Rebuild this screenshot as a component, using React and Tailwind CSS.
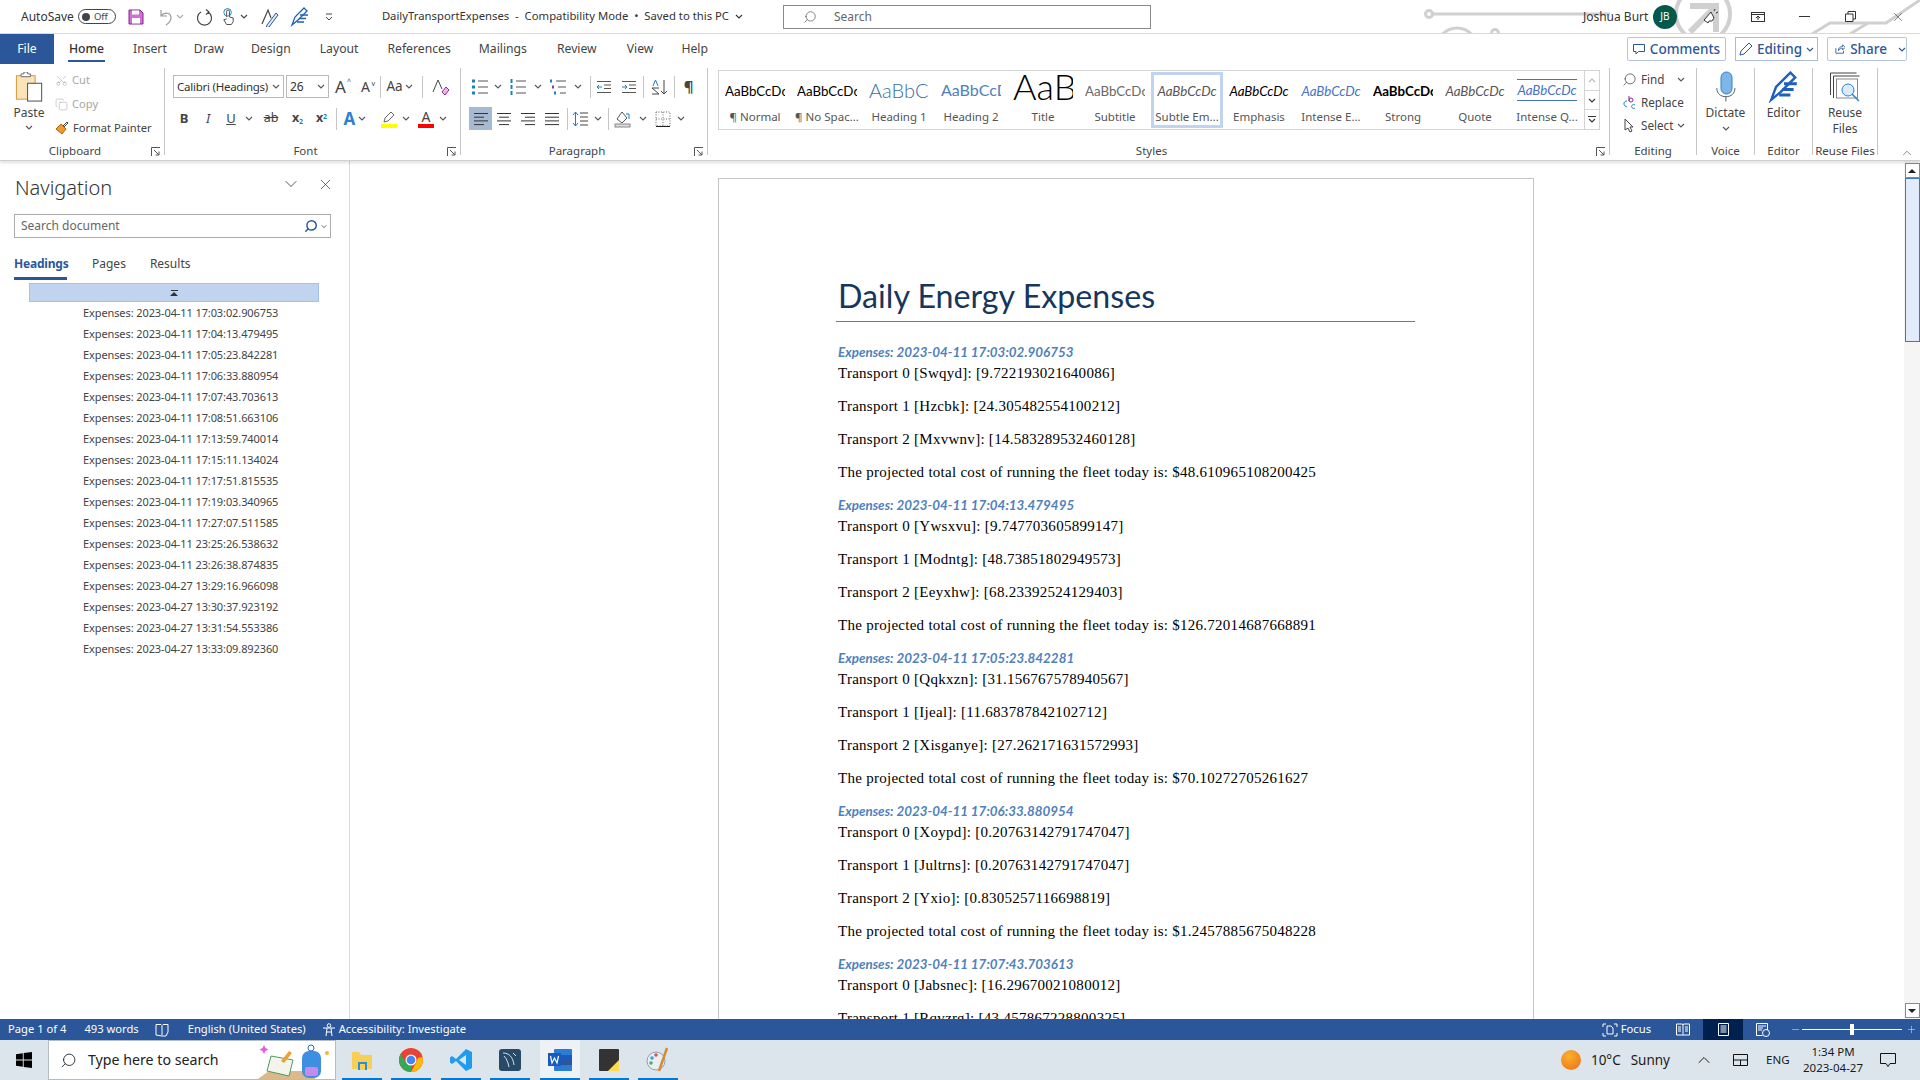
import React from "react";
import { Search, X, ChevronDown, ChevronUp, Minus, Plus, Scissors, Copy } from "lucide-react";

const Chev = ({ c = "#555", cls = "" }) => (
  <svg viewBox="0 0 8 5" className={`w-2 h-[5px] shrink-0 ${cls}`}><path d="M1 1l3 3 3-3" stroke={c} strokeWidth="1.1" fill="none" /></svg>
);
const VSep = ({ cls = "h-[22px] mx-[2px]" }) => <div className={`w-px bg-[#c6c6c6] shrink-0 ${cls}`} />;
const Launcher = () => (
  <svg viewBox="0 0 10 10" className="w-[10px] h-[10px] absolute right-[3px] bottom-[-2px]"><path d="M.5 9V.5H9M3 3l5 5M8 4.5V8H4.5" stroke="#555" fill="none" /></svg>
);
const Group = ({ label, w, lc = "", children }) => (
  <div className={`relative shrink-0 h-[87px] border-r border-[#c6c6c6] ${w}`}>
    {children}
    <div className={`absolute inset-x-0 bottom-[-4px] text-center text-[11.5px] leading-[16px] text-[#444] ${lc}`}>{label}</div>
  </div>
);
const Btn = ({ w = "w-6", cls = "", children }) => (
  <div className={`h-[23px] flex items-center justify-center shrink-0 ${w} ${cls}`}>{children}</div>
);

const Lines = ({ kind }) => {
  const rows = { left: [[1, 15], [1, 11], [1, 15], [1, 11]], center: [[1, 15], [3, 13], [1, 15], [3, 13]], right: [[1, 15], [5, 15], [1, 15], [5, 15]], just: [[1, 15], [1, 15], [1, 15], [1, 15]] }[kind];
  return (
    <svg viewBox="0 0 16 14" className="w-4 h-[14px]">
      {rows.map((r, i) => <path key={i} d={`M${r[0]} ${1.5 + i * 3.7}H${r[1]}`} stroke="#333" />)}
    </svg>
  );
};
const ListIcon = ({ n }) => (
  <svg viewBox="0 0 18 16" className="w-[18px] h-4">
    {[2, 8, 14].map((y, i) => (
      <g key={y}>
        {n === 0 && <rect x="1" y={y - 1.5} width="3" height="3" fill="#1e7fc4" />}
        {n === 1 && <rect x="1.5" y={y - 2} width="2" height="4" fill="#1e7fc4" />}
        {n === 2 && <rect x={1 + i * 2} y={y - 1.5} width="2" height="3" fill={i === 1 ? "#8a3fb0" : "#1e7fc4"} />}
        <path d={`M${n === 2 ? 7 + i * 2 : 7} ${y}H17`} stroke="#555" />
      </g>
    ))}
  </svg>
);

const QatUndo = () => (
  <svg viewBox="0 0 18 18" className="w-[18px] h-[18px]"><path d="M4 2v6h6M4 8c3-4 10-4 10 2 0 3-2 5-5 7" stroke="#9a9a9a" strokeWidth="1.2" fill="none" /></svg>
);
const QatRedo = () => (
  <svg viewBox="0 0 18 18" className="w-[18px] h-[18px]"><path d="M10 1.5 13 4l-3 2.5M12 4A7 7 0 1 1 5 4" stroke="#444" strokeWidth="1.2" fill="none" /></svg>
);
const PenA = () => (
  <svg viewBox="0 0 20 20" className="w-5 h-5"><path d="M2 17 8 3l3 8" stroke="#444" strokeWidth="1.2" fill="none" /><path d="m7 18 9-12 2 2-9 12-3 1z" stroke="#2b579a" fill="#dbe6f4" /></svg>
);
const PenB = ({ cls = "w-5 h-5", sw = 1.3 }) => (
  <svg viewBox="0 0 20 20" className={cls}><path d="m2 18 3-8 9-9 3 3-9 9z" stroke="#1f5fbf" strokeWidth={sw} fill="none" /><path d="M10 8h8M9 11.5h7M7 15h7" stroke="#1f5fbf" strokeWidth={sw + 0.4} /></svg>
);

const TitleBar = () => (
  <div className="relative h-[34px] border-b border-[#d9d9d9] flex items-center overflow-hidden">
    <svg viewBox="0 0 500 34" className="absolute left-[1420px] top-0 w-[500px] h-[34px]" fill="none" stroke="#d0d0d0" strokeWidth="3">
      <circle cx="9" cy="14" r="3.5" /><path d="M13 14H190" />
      <circle cx="37" cy="48" r="20" /><circle cx="37" cy="48" r="13" />
      <circle cx="75" cy="33" r="3.5" />
      <circle cx="283" cy="14" r="27" strokeWidth="4" /><path d="M270 32 296 6M270 6h26v26" strokeWidth="6" />
      <path d="M392 34l18-11h56L500 0" /><path d="M430 34l18-11" />
    </svg>
    <div className="relative flex items-center w-full">
      <span className="ml-[21px] text-[12px] text-[#333]">AutoSave</span>
      <div className="ml-[4px] w-[38px] h-[15px] rounded-full border border-[#444] flex items-center gap-[4px] pl-[3px]">
        <div className="w-[8px] h-[8px] rounded-full bg-[#444]" /><span className="text-[9.5px] leading-none text-[#444]">Off</span>
      </div>
      <svg viewBox="0 0 16 16" className="ml-[12px] w-4 h-4"><path d="M1 1h11l3 3v11H1z" fill="#d16fd6" stroke="#7b2c85" /><rect x="4" y="1.5" width="7" height="4" fill="#fff" /><rect x="4" y="9" width="8" height="5.5" fill="#fff" /></svg>
      <div className="ml-[13px] flex items-center"><QatUndo /><Chev c="#aaa" cls="ml-[1px]" /></div>
      <div className="ml-[12px]"><QatRedo /></div>
      <div className="ml-[7px] flex items-center gap-[4px]">
        <svg viewBox="0 0 16 18" className="w-[15px] h-[18px]"><path d="M6 9V3a1.5 1.5 0 0 1 3 0v6l4 1v4l-2 3H6l-3-5 3-1" stroke="#444" fill="#fff" /><circle cx="7" cy="4" r="4" fill="none" stroke="#1e7fc4" /></svg>
        <Chev c="#444" />
      </div>
      <div className="ml-[12px]"><PenA /></div>
      <div className="ml-[10px]"><PenB /></div>
      <svg viewBox="0 0 8 8" className="ml-[15px] w-2 h-2"><path d="M1 1h6M1 4l3 3 3-3" stroke="#444" fill="none" /></svg>
      <span className="ml-[49px] w-[352px] text-[11.3px] text-[#333] whitespace-pre">DailyTransportExpenses  -  Compatibility Mode  •  Saved to this PC</span>
      <Chev c="#333" cls="ml-[1px]" />
      <div className="ml-[40px] w-[368px] h-[24px] border border-[#8a8a8a] bg-white flex items-center">
        <Search size={14} strokeWidth={1.2} className="ml-[19px] text-[#555] -scale-x-100" />
        <span className="ml-[17px] text-[12px] text-[#666]">Search</span>
      </div>
      <span className="ml-[432px] w-[62px] text-[12px] text-[#333] whitespace-nowrap">Joshua Burt</span>
      <div className="ml-[8px] w-6 h-6 rounded-full bg-[#04594a] text-white text-[10px] flex items-center justify-center">JB</div>
      <svg viewBox="0 0 18 18" className="ml-[25px] w-[18px] h-[18px]"><path d="m2 12 7-8 3 6-2 3H7l-1 2zM12 3l1-2M14 5l2-1" stroke="#333" fill="#fff" /></svg>
      <svg viewBox="0 0 14 10" className="ml-[31px] w-[14px] h-[10px]"><rect x=".5" y=".5" width="13" height="9" fill="none" stroke="#333" /><path d="M.5 2.5h13M7 8V4M5 6l2-2 2 2" stroke="#333" fill="none" /></svg>
      <div className="ml-[34px] w-[11px] h-px bg-[#333]" />
      <svg viewBox="0 0 11 11" className="ml-[35px] w-[11px] h-[11px]"><path d="M.5 3h7.500v7.500H.5zM3 3V.5h7.500V8H8" fill="none" stroke="#333" /></svg>
      <X size={14} strokeWidth={1} className="ml-[35px] text-[#333]" />
    </div>
  </div>
);

const TabBar = () => (
  <div className="h-[30px] flex items-center relative">
    <div className="w-[54px] h-full bg-[#2b579a] text-white text-[12.2px] flex items-center justify-center">File</div>
    <div className="ml-[14px] flex items-center text-[12.2px] text-[#444] h-full pt-px">
      <div className="relative w-[37px] text-center font-medium text-[#333] h-full flex items-center justify-center">Home<div className="absolute left-0 right-0 bottom-[2px] h-[2px] bg-[#2b579a]" /></div>
      <span className="ml-[28px]">Insert</span>
      <span className="ml-[27px]">Draw</span>
      <span className="ml-[27px]">Design</span>
      <span className="ml-[29px]">Layout</span>
      <span className="ml-[29px]">References</span>
      <span className="ml-[28px]">Mailings</span>
      <span className="ml-[30px]">Review</span>
      <span className="ml-[30px]">View</span>
      <span className="ml-[28px]">Help</span>
    </div>
    <div className="ml-auto mr-[13px] flex gap-[9px] items-center text-[13.5px] text-[#2b579a] font-medium">
      <div className="w-[99px] h-[24px] border border-[#b4c5dc] rounded-[2px] flex items-center justify-center gap-[5px] ">
        <svg viewBox="0 0 12 11" className="w-3 h-[11px]"><path d="M.5.5h11v7h-6L3 10V7.500H.5z" fill="none" stroke="#2b579a" /></svg>Comments
      </div>
      <div className="w-[83px] h-[24px] border border-[#a9bcd6] flex items-center justify-center gap-[4px]">
        <svg viewBox="0 0 14 14" className="w-[14px] h-[14px]"><path d="m1 13 1-4 8-8 3 3-8 8z" fill="none" stroke="#2b579a" /></svg>Editing<Chev c="#2b579a" />
      </div>
      <div className="w-[80px] h-[24px] border border-[#b4c5dc] rounded-[2px] flex items-center pl-[7px] gap-[5px]">
        <svg viewBox="0 0 12 12" className="w-3 h-3"><path d="M1 5v6h9V8M4 8c0-3 2-5 5-5V1l3 3-3 3V5C7 5 5 6 4 8z" fill="none" stroke="#2b579a" /></svg>Share<Chev c="#2b579a" cls="ml-[6px]" />
      </div>
    </div>
  </div>
);

const ClipboardGroup = () => (
  <Group label="Clipboard" w="w-[165px]" lc="pr-[14px]">
    <Launcher />
    <div className="flex">
      <div className="w-[55px] pl-[3px] flex flex-col items-center pt-[4px]">
        <svg viewBox="0 0 30 32" className="w-[29px] h-[30px]">
          <rect x="1" y="4" width="20" height="25" fill="#fbe3b9" stroke="#d9902f" />
          <path d="M6 5V2h3V0h4v2h3v3z" fill="#fff" stroke="#666" />
          <rect x="13" y="12" width="15" height="19" fill="#fff" stroke="#444" />
        </svg>
        <span className="mt-[3px] text-[12px] leading-[16px] text-[#444]">Paste</span>
        <Chev cls="mt-[4px]" />
      </div>
      <div className="pt-[2px] flex flex-col gap-[4px] text-[11.2px] leading-[20px]">
        <div className="flex items-center gap-[2px] text-[#a6a6a6]"><Scissors size={13} strokeWidth={1} className="-rotate-90" /><span className="ml-[2px]">Cut</span></div>
        <div className="flex items-center gap-[2px] text-[#a6a6a6]"><Copy size={13} strokeWidth={1} /><span className="ml-[2px]">Copy</span></div>
        <div className="flex items-center gap-[2px] text-[#444] whitespace-nowrap">
          <svg viewBox="0 0 14 14" className="w-[14px] h-[14px]"><path d="m1 8 5-5 5 5-4 5z" fill="#f39a2a" stroke="#b5610e" /><path d="m8 5 4-4 1 1-4 4" stroke="#444" fill="none" /></svg>
          <span className="ml-[2px]">Format Painter</span>
        </div>
      </div>
    </div>
  </Group>
);

const A = ({ size, mark }) => (
  <span className={`relative text-[#444] leading-none ${size}`}>A<span className="absolute -right-[5px] top-0 text-[7px]">{mark}</span></span>
);
const FontGroup = () => (
  <Group label="Font" w="w-[296px]" lc="pr-[14px]">
    <Launcher />
    <div className="flex items-center pl-[8px] pt-[7px]">
      <div className="w-[111px] h-[23px] border border-[#bababa] flex items-center pl-[3px] pr-[3px] text-[11.5px] -tracking-[0.25px] text-[#333] justify-between">
        <span className="w-[93px] whitespace-nowrap overflow-hidden">Calibri (Headings)</span><Chev />
      </div>
      <div className="ml-[2px] w-[43px] h-[23px] border border-[#bababa] flex items-center pl-[3px] pr-[3px] text-[12px] text-[#333] justify-between">26<Chev /></div>
      <Btn w="w-[25px]" cls="-ml-[1px]"><A size="text-[17px]" mark="^" /></Btn>
      <Btn w="w-[25px]"><A size="text-[14px]" mark="v" /></Btn>
      <VSep cls="h-[22px] ml-[2px]" />
      <Btn w="w-[37px]"><span className="text-[13.5px] text-[#444]">Aa</span><Chev cls="ml-[2px]" /></Btn>
      <VSep cls="h-[22px] ml-[4px]" />
      <Btn w="w-[32px]" cls="pl-[3px]">
        <svg viewBox="0 0 18 18" className="w-[18px] h-[18px]"><path d="M1 14 6 2l4 9" stroke="#444" fill="none" /><path d="m10 14 4-5 3 3-4 5z" fill="#e9b7e8" stroke="#93279b" /></svg>
      </Btn>
    </div>
    <div className="flex items-center pl-[7px] pt-[9px] text-[#444]">
      <Btn w="w-[24px]"><span className="text-[13px] font-bold">B</span></Btn>
      <Btn w="w-[24px]"><span className="text-[13px] italic">I</span></Btn>
      <Btn w="w-[22px]"><span className="text-[13px] underline">U</span></Btn>
      <Btn w="w-[14px]"><Chev /></Btn>
      <Btn w="w-[30px]"><span className="text-[12.5px] line-through">ab</span></Btn>
      <Btn w="w-[23px]"><span className="text-[12.5px] font-bold">x<sub className="text-[7px] text-[#1e7fc4]">2</sub></span></Btn>
      <Btn w="w-[25px]"><span className="text-[12.5px] font-bold">x<sup className="text-[7px] text-[#1e7fc4]">2</sup></span></Btn>
      <VSep cls="h-[22px] ml-[2px]" />
      <Btn w="w-[32px]" cls="ml-[2px]"><span className="text-[17px] font-bold text-[#2f80d0] leading-none">A</span><Chev cls="ml-[3px]" /></Btn>
      <div className="ml-[10px] w-[16px] flex flex-col items-center">
        <svg viewBox="0 0 14 14" className="w-[14px] h-[14px]"><path d="m2 12 1-4 6-6 3 3-6 6z" fill="#fff" stroke="#666" /></svg>
        <div className="w-[16px] h-[4px] bg-[#ffff00]" />
      </div>
      <Chev cls="ml-[5px]" />
      <div className="ml-[8px] w-[16px] flex flex-col items-center">
        <span className="text-[14px] leading-[14px]">A</span>
        <div className="w-[16px] h-[4px] bg-[#ff0000]" />
      </div>
      <Chev cls="ml-[5px]" />
    </div>
  </Group>
);

const ParagraphGroup = () => (
  <Group label="Paragraph" w="w-[247px]" lc="pr-[14px]">
    <Launcher />
    <div className="flex items-center pl-[10px] pt-[7px]">
      <Btn w="w-[18px]"><ListIcon n={0} /></Btn><Btn w="w-[18px]"><Chev /></Btn>
      <Btn w="w-[22px]"><ListIcon n={1} /></Btn><Btn w="w-[18px]"><Chev /></Btn>
      <Btn w="w-[22px]"><ListIcon n={2} /></Btn><Btn w="w-[18px]"><Chev /></Btn>
      <VSep cls="h-[22px] ml-[3px]" />
      <Btn w="w-[26px]"><svg viewBox="0 0 16 14" className="w-4 h-[14px]"><path d="M1 1.500h14M8 5h7M8 8.500h7M1 12.500h14" stroke="#555" /><path d="M6 7H1M3 5 1 7l2 2" stroke="#1e7fc4" fill="none" /></svg></Btn>
      <Btn w="w-[24px]"><svg viewBox="0 0 16 14" className="w-4 h-[14px]"><path d="M1 1.500h14M8 5h7M8 8.500h7M1 12.500h14" stroke="#555" /><path d="M1 7h5M4 5l2 2-2 2" stroke="#1e7fc4" fill="none" /></svg></Btn>
      <VSep cls="h-[22px] ml-[2px]" />
      <Btn w="w-[29px]"><svg viewBox="0 0 18 18" className="w-[18px] h-[18px]"><path d="M14 2v14M11 13l3 3 3-3" stroke="#444" fill="none" /><path d="M2 16h7L2 10h7" stroke="#444" fill="none" /><path d="M3 8l2.500-6L8 8" stroke="#1e7fc4" fill="none" /></svg></Btn>
      <VSep cls="h-[22px] ml-[1px]" />
      <Btn w="w-[27px]"><span className="text-[15px] font-bold text-[#444]">¶</span></Btn>
    </div>
    <div className="flex items-center pl-[8px] pt-[9px]">
      <Btn w="w-[23px]" cls="bg-[#a7bad3]"><Lines kind="left" /></Btn>
      <Btn w="w-[24px]"><Lines kind="center" /></Btn>
      <Btn w="w-[24px]"><Lines kind="right" /></Btn>
      <Btn w="w-[24px]"><Lines kind="just" /></Btn>
      <VSep cls="h-[22px] ml-[3px]" />
      <Btn w="w-[22px]" cls="ml-px"><svg viewBox="0 0 16 16" className="w-4 h-4"><path d="M8 2h8M8 6h8M8 10h8M8 14h8" stroke="#444" /><path d="M3.500 1v14M1 4l2.500-3L6 4M1 12l2.500 3L6 12" stroke="#1e7fc4" fill="none" /></svg></Btn>
      <Btn w="w-[14px]"><Chev /></Btn>
      <VSep cls="h-[22px] ml-[3px]" />
      <Btn w="w-[26px]" cls="ml-px"><svg viewBox="0 0 18 18" className="w-[18px] h-[18px]"><path d="m3 9 5-7 5 6-5 5z" fill="none" stroke="#555" /><path d="M12 4h3v5" stroke="#1e7fc4" fill="none" /><rect x="1" y="14" width="15" height="3" fill="#ddd" stroke="#888" /></svg></Btn>
      <Btn w="w-[14px]"><Chev /></Btn>
      <Btn w="w-[26px]"><svg viewBox="0 0 16 16" className="w-4 h-4"><path d="M1 1h14v14H1zM8 1v14M1 8h14" stroke="#666" strokeDasharray="1 1.500" fill="none" /><path d="M1 15.500h14" stroke="#222" /></svg></Btn>
      <Btn w="w-[10px]"><Chev /></Btn>
    </div>
  </Group>
);

const lato = "[font-family:'Lato',sans-serif]";
const styles = [
  ["AaBbCcDc", "¶ Normal", `text-[13.3px] text-black ${lato}`],
  ["AaBbCcDc", "¶ No Spac...", `text-[13.3px] text-black ${lato}`],
  ["AaBbCc", "Heading 1", `text-[20px] text-[#3a6ea5] font-light ${lato}`],
  ["AaBbCcD", "Heading 2", `text-[16px] text-[#4f81bd] ${lato}`],
  ["AaB", "Title", `text-[36px] text-black font-light leading-[30px] relative -top-[2px] ${lato}`],
  ["AaBbCcDc", "Subtitle", `text-[13.3px] text-[#6a6a6a] ${lato}`],
  ["AaBbCcDc", "Subtle Em...", `text-[13.3px] italic text-[#555] ${lato}`],
  ["AaBbCcDc", "Emphasis", `text-[13.3px] italic text-black ${lato}`],
  ["AaBbCcDc", "Intense E...", `text-[13.3px] italic text-[#4472c4] ${lato}`],
  ["AaBbCcDc", "Strong", `text-[13.3px] font-bold text-black ${lato}`],
  ["AaBbCcDc", "Quote", `text-[13.3px] italic text-[#555] ${lato}`],
  ["AaBbCcDc", "Intense Q...", `text-[13.3px] italic text-[#4472c4] ${lato}`],
];

const StylesGroup = () => (
  <Group label="Styles" w="w-[902px]" lc="pr-[14px]">
    <Launcher />
    <div className="ml-[10px] mt-[2px] w-[882px] h-[60px] border border-[#d4d4d4] flex">
      <div className="flex-1 flex">
        {styles.map(([s, l, c], i) => (
          <div key={l} className={`w-[72px] h-[56px] mt-px flex flex-col items-center overflow-hidden ${i === 6 ? "border-[3px] border-[#c0d4f0]" : ""}`}>
            <div className={`w-[60px] h-[36px] shrink-0 flex items-center justify-center overflow-hidden ${i === 6 ? "mt-[-3px]" : ""}`}>
              <div className={`w-full text-center overflow-hidden whitespace-nowrap ${i === 11 ? "border-y border-[#4472c4] leading-[19px]" : ""}`}><span className={c}>{s}</span></div>
            </div>
            <div className="mt-px text-[11.5px] leading-[16px] text-[#555] whitespace-nowrap">{l}</div>
          </div>
        ))}
      </div>
      <div className="w-[15px] flex flex-col border-l border-[#d4d4d4]">
        <div className="flex-1 flex items-center justify-center"><Chev c="#bbb" cls="rotate-180" /></div>
        <div className="flex-1 flex items-center justify-center border-y border-[#d4d4d4]"><Chev c="#333" /></div>
        <div className="flex-1 flex flex-col items-center justify-center gap-[1px]"><div className="w-2 h-px bg-[#333]" /><Chev c="#333" /></div>
      </div>
    </div>
  </Group>
);

const EditingGroup = () => (
  <Group label="Editing" w="w-[87px]">
    <div className="pl-[12px] flex flex-col text-[11.7px] text-[#444] leading-[23px]">
      <div className="flex items-center gap-[4px]"><Search size={15} strokeWidth={1.2} className="-scale-x-100" /><span>Find</span><Chev cls="ml-[8px]" /></div>
      <div className="flex items-center gap-[4px]"><svg viewBox="0 0 15 15" className="w-[15px] h-[15px]"><path d="M5 6C2 6 1 9 3 11l2 1" stroke="#1e7fc4" fill="none" /><circle cx="9" cy="5" r="2" fill="none" stroke="#93279b" /><path d="M7 1v5" stroke="#93279b" /><path d="M13 10a2 2 0 1 0 0 3" stroke="#1e7fc4" fill="none" /></svg><span>Replace</span></div>
      <div className="flex items-center gap-[4px]"><svg viewBox="0 0 15 15" className="w-[15px] h-[15px]"><path d="M3 1v11l3-2 2 4 2-1-2-4h3z" fill="#fff" stroke="#444" /></svg><span>Select</span><Chev /></div>
    </div>
  </Group>
);

const BigCol = ({ label, w, icon, lines, chev }) => (
  <Group label={label} w={w}>
    <div className="flex flex-col items-center pt-[3px]">
      <div className="h-[32px] mb-[2px] flex items-center">{icon}</div>
      {lines.map((l) => <span key={l} className="text-[12px] leading-[16px] text-[#444]">{l}</span>)}
      {chev && <Chev cls="mt-[5px]" />}
    </div>
  </Group>
);

const Ribbon = () => (
  <div className="relative h-[97px] flex pt-[4px] border-b border-[#cfcfcf] shadow-[0_2px_3px_rgba(0,0,0,0.12)] z-10 bg-white">
    <ClipboardGroup />
    <FontGroup />
    <ParagraphGroup />
    <StylesGroup />
    <EditingGroup />
    <BigCol label="Voice" w="w-[58px]" chev lines={["Dictate"]} icon={
      <svg viewBox="0 0 24 32" className="w-6 h-8"><rect x="7" y="1" width="11" height="22" rx="5.500" fill="#7fb6e8" stroke="#2f80d0" /><path d="M3 18c0 6 4 9 9.500 9s9.500-3 9.500-9M12.500 27v5" stroke="#555" fill="none" transform="scale(.95)" /></svg>} />
    <BigCol label="Editor" w="w-[58px]" lines={["Editor"]} icon={<PenB cls="w-[32px] h-[32px]" sw={1.5} />} />
    <BigCol label="Reuse Files" w="w-[65px]" lines={["Reuse", "Files"]} icon={
      <svg viewBox="0 0 32 32" className="w-8 h-8"><path d="M1.500 24V2h26M4.500 27V5h26" fill="none" stroke="#444" /><rect x="7.500" y="8" width="21" height="19" fill="#fff" stroke="#888" /><circle cx="19" cy="19" r="6" fill="#d9ecfb" stroke="#2f80d0" /><path d="m23 23 7 7" stroke="#2f80d0" strokeWidth="1.500" /></svg>} />
    <ChevronUp size={14} strokeWidth={1} className="absolute left-[1900px] top-[82px] text-[#333]" />
  </div>
);

const navItems = [
  "2023-04-11 17:03:02.906753", "2023-04-11 17:04:13.479495", "2023-04-11 17:05:23.842281", "2023-04-11 17:06:33.880954",
  "2023-04-11 17:07:43.703613", "2023-04-11 17:08:51.663106", "2023-04-11 17:13:59.740014", "2023-04-11 17:15:11.134024",
  "2023-04-11 17:17:51.815535", "2023-04-11 17:19:03.340965", "2023-04-11 17:27:07.511585", "2023-04-11 23:25:26.538632",
  "2023-04-11 23:26:38.874835", "2023-04-27 13:29:16.966098", "2023-04-27 13:30:37.923192", "2023-04-27 13:31:54.553386",
  "2023-04-27 13:33:09.892360",
];

const NavPane = () => (
  <div className="w-[350px] shrink-0 border-r border-[#d9d9d9] pl-[14px] bg-white">
    <div className="flex items-center h-[53px]">
      <span className="ml-px text-[20px] text-[#333] font-light">Navigation</span>
      <ChevronDown size={20} strokeWidth={1} className="ml-auto -mt-[7px] text-[#333]" />
      <X size={17} strokeWidth={1} className="ml-[16px] mr-[15px] -mt-[7px] text-[#333]" />
    </div>
    <div className="w-[317px] h-[24px] border border-[#ababab] flex items-center pl-[6px] pr-[2px]">
      <span className="text-[12px] text-[#666]">Search document</span>
      <Search size={14} strokeWidth={2.5} className="ml-auto text-[#2b579a] -scale-x-100" />
      <Chev c="#444" cls="ml-[2px] scale-75" />
    </div>
    <div className="mt-[17px] flex h-[25px] text-[12px] text-[#444]">
      <div className="w-[53px] text-center font-bold text-[#2b579a] border-b-[3px] border-[#2b579a] -tracking-[0.2px]">Headings</div>
      <span className="ml-[25px]">Pages</span>
      <span className="ml-[24px]">Results</span>
    </div>
    <div className="ml-[15px] mt-[3px] w-[290px] h-[19px] bg-[#c0d4f0] border border-[#a6c0e6] flex flex-col items-center justify-center gap-px">
      <div className="w-[7px] h-px bg-[#333]" />
      <svg viewBox="0 0 8 4" className="w-2 h-1"><path d="M4 0 8 4H0z" fill="#333" /></svg>
    </div>
    <div className="ml-[69px]">
      {navItems.map((t) => (
        <div key={t} className="h-[21px] leading-[21px] text-[11px] -tracking-[0.1px] text-[#444] whitespace-nowrap">Expenses: {t}</div>
      ))}
    </div>
  </div>
);

const sections = [
  ["2023-04-11 17:03:02.906753", ["Swqyd", "9.722193021640086"], ["Hzcbk", "24.305482554100212"], ["Mxvwnv", "14.583289532460128"], "48.610965108200425"],
  ["2023-04-11 17:04:13.479495", ["Ywsxvu", "9.747703605899147"], ["Modntg", "48.73851802949573"], ["Eeyxhw", "68.23392524129403"], "126.72014687668891"],
  ["2023-04-11 17:05:23.842281", ["Qqkxzn", "31.156767578940567"], ["Ijeal", "11.683787842102712"], ["Xisganye", "27.262171631572993"], "70.10272705261627"],
  ["2023-04-11 17:06:33.880954", ["Xoypd", "0.20763142791747047"], ["Jultrns", "0.20763142791747047"], ["Yxio", "0.8305257116698819"], "1.2457885675048228"],
  ["2023-04-11 17:07:43.703613", ["Jabsnec", "16.29670021080012"], ["Rqvzrg", "43.457867228800325"], ["Hmtkle", "21.72893361440016"], "81.48350105400061"],
];

const Doc = () => (
  <div className="flex-1 min-w-0 overflow-hidden bg-white pl-[368px] pt-[17px]">
    <div className="w-[816px] h-[1056px] border border-[#c6c6c6] bg-white pl-[119px] pr-[118px]">
      <div className={`mt-[97px] h-[46px] border-b border-[#4f81bd] -ml-[2px] pl-[2px] text-[32.2px] leading-[40px] text-[#17365d] whitespace-nowrap ${lato}`}>Daily Energy Expenses</div>
      <div className="pt-[19px]">
        {sections.map((s) => (
          <div key={s[0]} className="h-[153px] text-[15px] text-black [font-family:'Liberation_Serif',serif] whitespace-nowrap">
            <div className={`h-[22px] leading-[22px] text-[13.4px] font-bold italic text-[#4f81bd] ${lato}`}>Expenses: {s[0]}</div>
            {[s[1], s[2], s[3]].map((t, i) => (
              <div key={i} className="h-[33px] leading-[21px] tracking-[0.27px]">Transport {i} [{t[0]}]: [{t[1]}]</div>
            ))}
            <div className="leading-[21px] tracking-[0.27px]">The projected total cost of running the fleet today is: ${s[4]}</div>
          </div>
        ))}
      </div>
    </div>
  </div>
);

const Scrollbar = () => (
  <div className="w-4 shrink-0 flex flex-col items-center bg-[#f5f5f5] relative">
    <div className="w-[15px] h-[15px] mt-[2px] border border-[#8a8a8a] bg-white flex items-center justify-center">
      <svg viewBox="0 0 8 4" className="w-2 h-1"><path d="M4 0 8 4H0z" fill="#222" /></svg>
    </div>
    <div className="w-[15px] h-[164px] bg-[#e1ebf9] border border-[#4078b8]" />
    <div className="mt-auto mb-[1px] w-[15px] h-[15px] border border-[#8a8a8a] bg-white flex items-center justify-center">
      <svg viewBox="0 0 8 4" className="w-2 h-1"><path d="M0 0h8L4 4z" fill="#222" /></svg>
    </div>
  </div>
);

const StatusBar = () => (
  <div className="h-[21px] bg-[#2b579a] text-white text-[11.2px] flex items-center shrink-0">
    <span className="ml-[8px]">Page 1 of 4</span>
    <span className="ml-[18px]">493 words</span>
    <svg viewBox="0 0 14 14" className="ml-[16px] w-[14px] h-[14px]"><path d="M1 1.500h5l1 1 1-1h5V9l-2 4H7L1 12zM7 3v9" fill="none" stroke="#fff" /></svg>
    <span className="ml-[19px]">English (United States)</span>
    <svg viewBox="0 0 14 14" className="ml-[16px] w-[14px] h-[14px]"><circle cx="7" cy="2.500" r="1.800" fill="none" stroke="#fff" /><path d="M1 5h12M5 5l-1 8M9 5l1 8M5 9h4" stroke="#fff" fill="none" /></svg>
    <span className="ml-[3px]">Accessibility: Investigate</span>
    <svg viewBox="0 0 16 14" className="ml-auto w-4 h-[14px]"><path d="M1 4V1h3M12 1h3v3M1 10v3h3M12 13h3v-3" stroke="#fff" fill="none" /><path d="M5 3h4l2 2v6H5z" stroke="#fff" fill="none" /></svg>
    <span className="ml-[3px] mr-[25px]">Focus</span>
    <svg viewBox="0 0 14 13" className="w-[14px] h-[13px] mr-[13px]"><path d="M.5 1h6l.5 1 .5-1h6v11h-6L7 12.500 6.500 12h-6zM7 2v10M2 4h3M2 6h3M2 8h3M9 4h3M9 6h3M9 8h3" stroke="#fff" fill="none" /></svg>
    <div className="w-[40px] h-[21px] bg-[#002050] flex items-center justify-center">
      <svg viewBox="0 0 11 13" className="w-[11px] h-[13px]"><path d="M.5.5h10v12H.5zM2.500 3h6M2.500 5h6M2.500 7h6M2.500 9h6" stroke="#fff" fill="none" /></svg>
    </div>
    <svg viewBox="0 0 14 14" className="ml-[13px] w-[14px] h-[14px]"><path d="M.5.5h11v9M.5.500v12h6M2 3h8M2 5h5M2 7h4" stroke="#fff" fill="none" /><circle cx="10" cy="10" r="3.500" fill="#2b579a" stroke="#fff" /></svg>
    <Minus size={11} strokeWidth={1} className="ml-[20px]" />
    <div className="ml-[1px] w-[100px] h-px bg-white relative">
      <div className="absolute left-[48px] top-[-5px] w-[4px] h-[11px] bg-white" />
    </div>
    <Plus size={11} strokeWidth={1} className="ml-[4px] mr-[3px]" />
  </div>
);

const TaskIcon = ({ children, active }) => (
  <div className={`relative w-[40px] h-[40px] flex items-center justify-center mr-[9.4px] ${active ? "bg-[#eef2f6]" : ""}`}>
    {children}
    <div className="absolute left-0 right-0 bottom-0 h-[2px] bg-[#0078d4]" />
  </div>
);

const Taskbar = () => (
  <div className="h-[40px] bg-[#dde5ec] flex items-center shrink-0 text-[#1a1a1a]">
    <div className="w-[48px] flex items-center justify-center">
      <svg viewBox="0 0 16 16" className="w-4 h-4"><path d="M0 2.200 6.800 1.200V7.600H0zM7.700 1 16 0V7.600H7.700zM0 8.400H6.800V14.800L0 13.800zM7.700 8.400H16V16L7.700 15z" fill="#000" /></svg>
    </div>
    <div className="relative w-[288px] h-[40px] bg-white border border-[#b5bcc2] flex items-center overflow-hidden">
      <Search size={17} strokeWidth={1.2} className="ml-[11px] -scale-x-100" />
      <span className="ml-[11px] text-[14.2px] text-[#222]">Type here to search</span>
      <svg viewBox="0 0 80 40" className="absolute right-0 top-0 w-[80px] h-[40px]">
        <path d="M9 4l1.500 3 3 1.500-3 1.500L9 13l-1.500-3-3-1.500 3-1.500z" fill="#e060e0" />
        <path d="M0 40 14 30h40l8 10z" fill="#dcb98a" />
        <path d="M12 30 16 15l22 4 -4 16z" fill="#f4f4ec" stroke="#4d9a5c" />
        <path d="m26 20 8-10 3 2-8 10z" fill="#f0a030" />
        <rect x="47" y="10" width="19" height="27" rx="7" fill="#3f8fe0" /><rect x="50" y="26" width="13" height="9" rx="2" fill="#c58be8" /><circle cx="56" cy="7" r="3" fill="none" stroke="#2a6fc0" />
        <circle cx="72" cy="12" r="2" fill="#f5b72e" />
      </svg>
    </div>
    <div className="ml-[6px] flex items-center">
      <TaskIcon>
        <svg viewBox="0 0 22 22" className="w-[22px] h-[22px]"><path d="M1 3h7l2 3h11v14H1z" fill="#f7cf57" /><rect x="7" y="13" width="9" height="8" fill="#2a8fd8" /><rect x="9" y="15" width="5" height="6" fill="#f7cf57" /></svg>
      </TaskIcon>
      <TaskIcon>
        <svg viewBox="0 0 24 24" className="w-6 h-6"><circle cx="12" cy="12" r="12" fill="#ea4335" /><path d="M12 24a12 12 0 0 1-10.400-18L7 15l5 2z" fill="#34a853" /><path d="M12 24 17 15l2-5 4.500-1A12 12 0 0 1 12 24z" fill="#fbbc05" /><circle cx="12" cy="12" r="5.500" fill="#fff" /><circle cx="12" cy="12" r="4.300" fill="#4285f4" /></svg>
      </TaskIcon>
      <TaskIcon>
        <svg viewBox="0 0 24 24" className="w-6 h-6"><path d="M17 1 7 11 3 8 1 9.500v5L3 16l4-3 10 10 6-3V4z" fill="#1f9cf0" /><path d="M17 7v10l-7-5z" fill="#dde5ec" /></svg>
      </TaskIcon>
      <TaskIcon>
        <svg viewBox="0 0 24 24" className="w-6 h-6"><rect x="1" y="1" width="22" height="22" rx="3" fill="#274a68" /><path d="M5 5c6 0 10 4 11 12M6 8c3 3 4 7 5 11M15 5l3 3" stroke="#d6e2ec" fill="none" /></svg>
      </TaskIcon>
      <TaskIcon active>
        <svg viewBox="0 0 26 24" className="w-[26px] h-6"><rect x="7" y="1" width="18" height="22" rx="1" fill="#2b7cd3" /><rect x="7" y="7" width="18" height="5" fill="#185abd" /><rect x="7" y="12" width="18" height="5" fill="#2b579a" /><rect x="1" y="5" width="13" height="13" fill="#185abd" /><path d="M3.500 8l1.500 7 2.500-5 2.500 5 1.500-7" stroke="#fff" strokeWidth="1.200" fill="none" /></svg>
      </TaskIcon>
      <TaskIcon>
        <svg viewBox="0 0 24 24" className="w-[24px] h-[24px]"><rect x="2" y="1" width="20" height="22" rx="1" fill="#333" /><path d="M22 12v11H11z" fill="#fcdc4d" /></svg>
      </TaskIcon>
      <TaskIcon>
        <svg viewBox="0 0 24 26" className="w-6 h-[26px]"><ellipse cx="10" cy="14" rx="9" ry="9" fill="#e8eef2" stroke="#8aa0b0" /><circle cx="6" cy="11" r="1.800" fill="#3aa0e0" /><circle cx="10" cy="8" r="1.800" fill="#e05050" /><circle cx="5" cy="16" r="1.800" fill="#50b060" /><path d="M21 1 13 24" stroke="#d88a30" strokeWidth="2.500" /></svg>
      </TaskIcon>
    </div>
    <div className="ml-auto flex items-center">
      <div className="w-5 h-5 rounded-full bg-[radial-gradient(circle_at_40%_30%,#f9b12f,#ee6c14)]" />
      <span className="ml-[10px] text-[13.5px]">10°C</span>
      <span className="ml-[10px] text-[13.5px]">Sunny</span>
      <ChevronUp size={20} strokeWidth={1.2} className="ml-[24px]" />
      <svg viewBox="0 0 15 12" className="ml-[19px] w-[15px] h-3"><path d="M.5.5h14v11H.5zM.5 6h14M7.500 6v5.500" stroke="#111" fill="none" /></svg>
      <span className="ml-[18px] w-[30px] text-[11.5px]">ENG</span>
      <div className="ml-[5px] w-[64px] text-center text-[11.5px] leading-[16px]"><div>1:34 PM</div><div>2023-04-27</div></div>
      <svg viewBox="0 0 16 15" className="ml-[15px] mr-[24px] w-4 h-[15px]"><path d="M.5.500h15v10H10l-2 3-2-3H.5z" stroke="#111" fill="none" /></svg>
    </div>
  </div>
);

export default function App() {
  return (
    <div className="w-[1920px] h-[1080px] overflow-hidden bg-white flex flex-col [font-family:'Noto_Sans',sans-serif]">
      <TitleBar />
      <TabBar />
      <Ribbon />
      <div className="flex-1 min-h-0 flex overflow-hidden">
        <NavPane />
        <Doc />
        <Scrollbar />
      </div>
      <StatusBar />
      <Taskbar />
    </div>
  );
}
